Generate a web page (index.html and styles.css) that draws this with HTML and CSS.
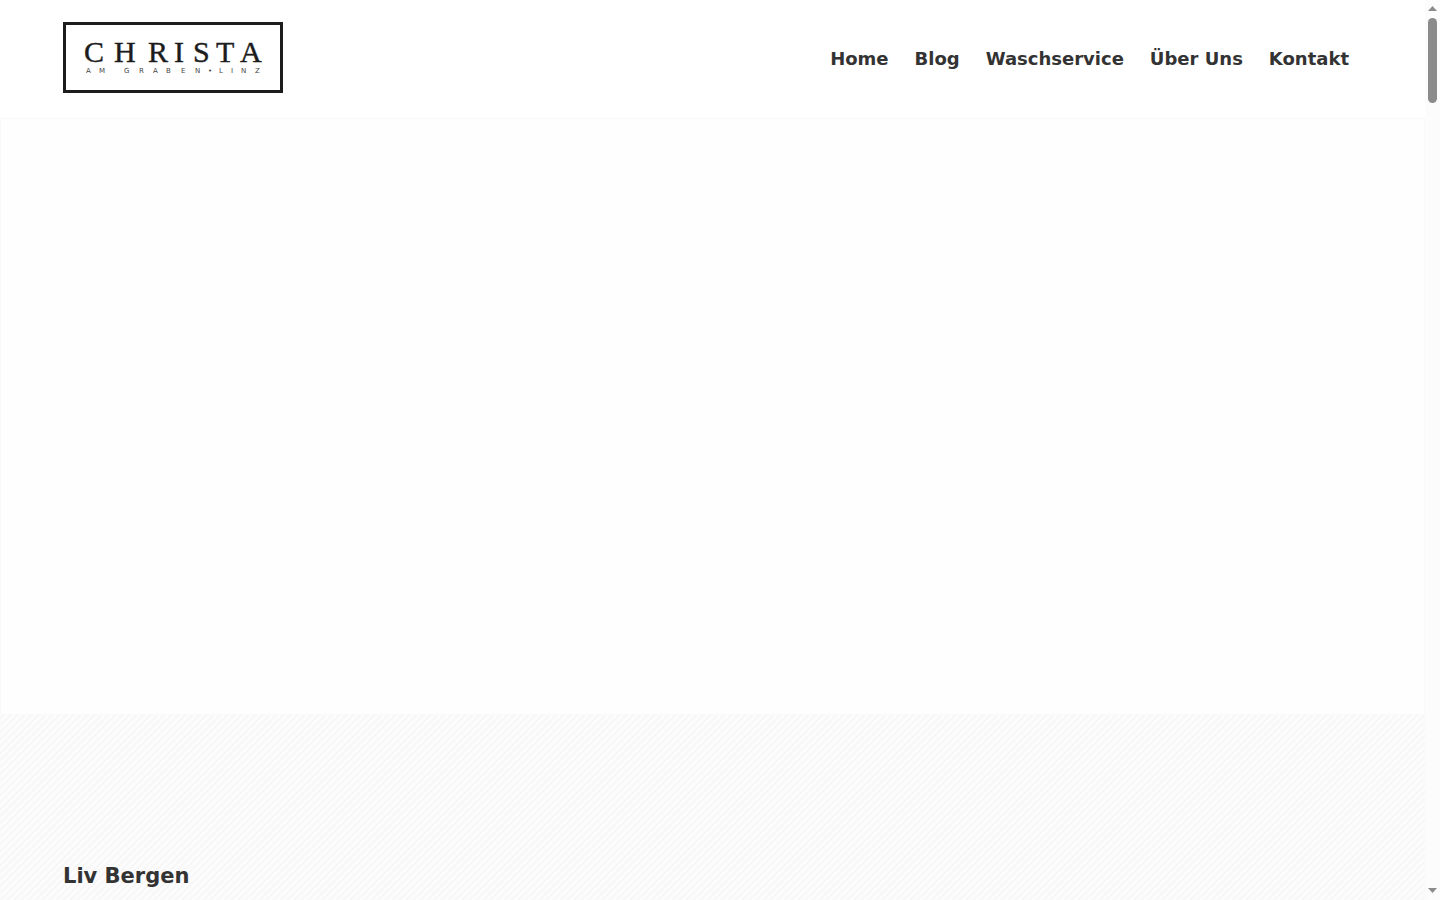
FILE: index.html
```html
<!DOCTYPE html>
<html lang="de">

<head>
  <meta charset="UTF-8">
  <meta name="viewport" content="width=device-width, initial-scale=1.0">
  <title>Christa am Graben</title>
  <link rel="stylesheet" href="styles.css">
</head>

<body>

  <div class="page">
    <header class="header">
      <a class="logo" href="#" aria-label="Christa am Graben Linz">
        <svg width="220" height="71" viewBox="0 0 220 71">
          <rect x="1.5" y="1.5" width="217" height="68" fill="#fff" stroke="#1c1c1c" stroke-width="3"/>
          <text class="logo-name" y="40" x="21 51 85 111 130 153 177">CHRISTA</text>
          <text class="logo-place" y="51" x="23 36 61 76 90 103 118 132 145 156 168 178 192">AMGRABEN•LINZ</text>
        </svg>
      </a>
      <nav class="nav">
        <a href="#">Home</a>
        <a href="#">Blog</a>
        <a href="#">Waschservice</a>
        <a href="#">Über Uns</a>
        <a href="#">Kontakt</a>
      </nav>
    </header>

    <section class="slider"></section>

    <main class="content">
      <h2>Liv Bergen</h2>
    </main>
  </div>

  <!-- scrollbar -->
  <div class="scrollbar">
    <svg width="9" height="5" viewBox="0 0 9 5"><path d="M0 5L4.500 0L9 5Z" fill="#8b8b8b"/></svg>
    <div class="thumb"></div>
    <svg width="9" height="5" viewBox="0 0 9 5"><path d="M0 0L4.500 5L9 0Z" fill="#8b8b8b"/></svg>
  </div>

</body>

</html>
```
FILE: styles.css
```css
* {
  margin: 0;
  padding: 0;
  box-sizing: border-box;
}

body {
  display: flex;
  height: 100vh;
  overflow: hidden;
  font-family: "DejaVu Sans", sans-serif;
  color: #333;
  background-color: #fff;
}

.page {
  flex: 1;
  display: flex;
  flex-direction: column;
}

.header {
  display: flex;
  justify-content: space-between;
  align-items: center;
  padding: 22px 76px 25px 63px;
}

.logo svg {
  display: block;
}

.logo-name {
  font-family: "Liberation Serif", serif;
  font-size: 30px;
  fill: #1c1c1c;
  stroke: #1c1c1c;
  stroke-width: 0.4;
}

.logo-place {
  font-family: "DejaVu Sans", sans-serif;
  font-size: 7px;
  fill: #444;
}

.nav {
  display: flex;
  gap: 26px;
  padding-top: 2px;
}

.nav a {
  font-size: 18px;
  line-height: 24px;
  font-weight: bold;
  color: #333;
  text-decoration: none;
}

.slider {
  height: 597px;
  border: 1px solid #f9f9f9;
  background-color: #fefefe;
}

.content {
  flex: 1;
  padding: 148px 63px 0;
  background: linear-gradient(135deg, #fcfcfc 10%, #f5f5f5 25%, #fcfcfc 40%, #fcfcfc 60%, #f5f5f5 75%, #fcfcfc 90%);
  background-size: 7px 7px;
}

.content h2 {
  font-size: 21px;
  line-height: 26px;
}

.scrollbar {
  display: flex;
  flex-direction: column;
  align-items: center;
  width: 15px;
  padding: 6px 0 7px;
  background-color: #fcfcfc;
}

.thumb {
  width: 9px;
  height: 85px;
  margin: 7px 0 auto;
  border-radius: 5px;
  background-color: #8b8b8b;
}
```
